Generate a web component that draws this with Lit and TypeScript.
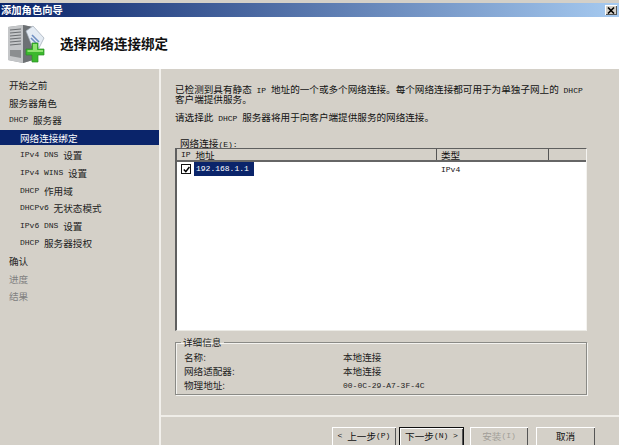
import { LitElement, html, css } from "lit";
import { customElement } from "lit/decorators.js";

const t = (s: string) =>
  s.split(/([\x20-\x7e]+)/).map((p, i) => (i % 2 ? html`<span class="l">${p}</span>` : p));

const steps: [string, string][] = [
  ["开始之前", "top"],
  ["服务器角色", "top"],
  ["DHCP 服务器", "top"],
  ["网络连接绑定", "sub sel"],
  ["IPv4 DNS 设置", "sub"],
  ["IPv4 WINS 设置", "sub"],
  ["DHCP 作用域", "sub"],
  ["DHCPv6 无状态模式", "sub"],
  ["IPv6 DNS 设置", "sub"],
  ["DHCP 服务器授权", "sub"],
  ["确认", "top"],
  ["进度", "top off"],
  ["结果", "top off"],
];

@customElement("app-root")
export class AppRoot extends LitElement {
  static styles = css`
    :host {
      display: block;
      width: 619px;
      height: 445px;
      overflow: hidden;
      background: #d4d0c8;
      font-family: "Noto Sans CJK SC", "Liberation Sans", sans-serif;
      font-size: 9.6px;
      line-height: 10px;
      color: #111;
    }
    * { box-sizing: border-box; }
    .l { font-family: "Liberation Mono", monospace; font-size: 8px; white-space: pre; }
    .win { display: flex; flex-direction: column; height: 445px; padding-top: 3px; }
    .titlebar {
      flex: none; height: 14px; display: flex; align-items: center; justify-content: space-between;
      padding: 0 2px 0 1px;
      background: linear-gradient(90deg, #0a246a, #a6caf0);
      color: #fff; font-size: 10.3px; font-weight: 700;
    }
    .close {
      width: 12px; height: 10px; background: #d4d0c8; display: flex; align-items: center; justify-content: center;
      box-shadow: inset 1px 1px 0 #fff, inset -1px -1px 0 #555;
    }
    .close svg { display: block; }
    .head {
      flex: none; height: 52px; background: #fff; display: flex; align-items: center; gap: 15px; padding-left: 7px;
    }
    .head svg { display: block; flex: none; }
    .head h1 { margin: 0; font-size: 13.5px; line-height: 16px; font-weight: 600; color: #111; }
    .body { flex: 1; min-height: 0; display: flex; }
    .side {
      flex: none; width: 159px; padding-top: 8.5px; display: flex; flex-direction: column; gap: 2.6px;
      color: #222;
    }
    .row { height: 15px; display: flex; align-items: center; white-space: pre; }
    .top { padding-left: 9px; }
    .sub { padding-left: 20px; }
    .sel { background: #0a246a; color: #fff; }
    .off { color: #808080; }
    .main {
      flex: 1; min-width: 0; display: flex; flex-direction: column;
      border-left: 2px solid #f2f0ec;
    }
    .content { flex: none; height: 346px; padding: 15px 32px 0 14px; display: flex; flex-direction: column; }
    .line { white-space: pre; height: 10px; }
    .gap1 { margin-top: 8px; }
    .netlabel { margin-top: 16px; padding-left: 5px; }
    .table {
      flex: none; height: 183px; margin-top: 0; background: #fff;
      border-top: 1px solid #5f5f5f; border-left: 2px solid #5f5f5f;
      border-right: 1px solid #f4f3f0; border-bottom: 1px solid #ecebe6;
      display: flex; flex-direction: column;
    }
    .thead {
      flex: none; height: 13px; background: #d4d0c8; border-bottom: 2px solid #666;
      display: grid; grid-template-columns: 260px 112px 1fr; align-items: stretch;
    }
    .th { padding-left: 4px; display: flex; align-items: center; border-right: 1px solid #555; white-space: pre; }
    .th:last-child { border-right: 0; }
    .tr { display: grid; grid-template-columns: 260px 112px 1fr; height: 14px; align-items: center; }
    .cell1 { display: flex; align-items: center; padding-left: 4px; height: 14px; }
    .check {
      width: 10px; height: 10px; border: 1.5px solid #111; background: #fff; margin-right: 3px; flex: none;
      display: flex; align-items: center; justify-content: center;
    }
    .check svg { display: block; }
    .ip { background: #0a246a; color: #fff; height: 14px; width: 60px; padding-left: 2px; display: flex; align-items: center; }
    .type { padding-left: 4px; }
    fieldset {
      flex: none; margin: 6px 0 0; padding: 3px 0 0 8px; height: 58px;
      border: 1px solid #8a8a86; box-shadow: 1px 1px 0 #f4f3f0, inset 1px 1px 0 #f4f3f0;
    }
    legend { padding: 0 3px 0 2px; margin-left: -3px; line-height: 10px; color: #222; }
    .info { display: grid; grid-template-columns: 159px 1fr; grid-auto-rows: 14px; align-items: center; color: #222; }
    .foot {
      flex: 1; border-top: 2px solid #efede8; margin-top: 0;
      display: flex; padding: 10px 0 0 171px; align-items: flex-start; color: #111;
    }
    .btn {
      flex: none; height: 22px; display: flex; align-items: center; justify-content: center; white-space: pre;
      padding-bottom: 4px;
      background: #d4d0c8; box-shadow: inset 1px 1px 0 #fff, inset -1px -1px 0 #555;
    }
    .prev { width: 64px; }
    .next { width: 65px; margin-left: 3px; border: 1px solid #111; box-shadow: inset 1px 1px 0 #fff, inset -1px -1px 0 #555; }
    .inst { width: 58px; margin-left: 6px; color: #a09d97; }
    .cancel { width: 59px; margin-left: 8px; }
  `;

  render() {
    return html`
      <div class="win">
        <div class="titlebar">
          <span>添加角色向导</span>
          <span class="close">
            <svg width="8" height="7" viewBox="0 0 8 7"><path d="M1 0.5 L7 6.5 M7 0.5 L1 6.5" stroke="#000" stroke-width="1.6" fill="none"/></svg>
          </span>
        </div>
        <header class="head">
          <svg width="38" height="42" viewBox="0 0 38 42">
            <path d="M1 5 L16 3 L26 5 L26 38 L16 41 L1 38 Z" fill="#9a9d9f"/>
            <path d="M1 5 L16 3 L16 41 L1 38 Z" fill="#c4c6c8"/>
            <path d="M16 3 L26 5 L26 38 L16 41 Z" fill="#6d7174"/>
            <path d="M3 8 L14 7 M3 11 L14 10 M3 14 L14 13 M3 17 L14 16 M3 20 L14 19 M3 23 L14 22" stroke="#6a6d70" stroke-width="1.2"/>
            <path d="M3 28 L14 28 L14 36 L3 34 Z" fill="#8b8e90"/>
            <path d="M19 9 L26 4 L37 16 L32 26 L25 24 Z" fill="#e4ebf3" stroke="#9fa9b6" stroke-width="0.7"/>
            <path d="M25 13 L32 20 M24 16 L30 22" stroke="#6f8fc2" stroke-width="1.6"/>
            <path d="M25 21 L31 21 L31 27 L37 27 L37 33 L31 33 L31 40 L25 40 L25 33 L19 33 L19 27 L25 27 Z" fill="#3cb82e" stroke="#2a8f24" stroke-width="0.7"/>
            <path d="M26 22 L30 22 L30 28 L26 28 Z M20.5 28 L36 28 L36 30 L20.5 30 Z" fill="#8fe36f"/>
          </svg>
          <h1>选择网络连接绑定</h1>
        </header>
        <div class="body">
          <nav class="side">
            ${steps.map(([s, c]) => html`<div class="row ${c}">${t(s)}</div>`)}
          </nav>
          <main class="main">
            <div class="content">
              <div class="line">${t("已检测到具有静态 IP 地址的一个或多个网络连接。每个网络连接都可用于为单独子网上的 DHCP")}</div>
              <div class="line">客户端提供服务。</div>
              <div class="line gap1">${t("请选择此 DHCP 服务器将用于向客户端提供服务的网络连接。")}</div>
              <div class="line netlabel">${t("网络连接(E):")}</div>
              <div class="table">
                <div class="thead">
                  <div class="th">${t("IP 地址")}</div>
                  <div class="th">类型</div>
                  <div class="th"></div>
                </div>
                <div class="tr">
                  <div class="cell1">
                    <span class="check">
                      <svg width="7" height="7" viewBox="0 0 7 7"><path d="M0.8 3.5 L2.8 5.6 L6.4 1" stroke="#000" stroke-width="1.5" fill="none"/></svg>
                    </span>
                    <span class="ip"><span class="l">192.168.1.1</span></span>
                  </div>
                  <div class="type"><span class="l">IPv4</span></div>
                  <div></div>
                </div>
              </div>
              <fieldset>
                <legend>详细信息</legend>
                <div class="info">
                  <div>名称:</div><div>本地连接</div>
                  <div>网络适配器:</div><div>本地连接</div>
                  <div>物理地址:</div><div><span class="l">00-0C-29-A7-3F-4C</span></div>
                </div>
              </fieldset>
            </div>
            <div class="foot">
              <div class="btn prev">${t("< 上一步(P)")}</div>
              <div class="btn next">${t("下一步(N) >")}</div>
              <div class="btn inst">${t("安装(I)")}</div>
              <div class="btn cancel">取消</div>
            </div>
          </main>
        </div>
      </div>
    `;
  }
}
